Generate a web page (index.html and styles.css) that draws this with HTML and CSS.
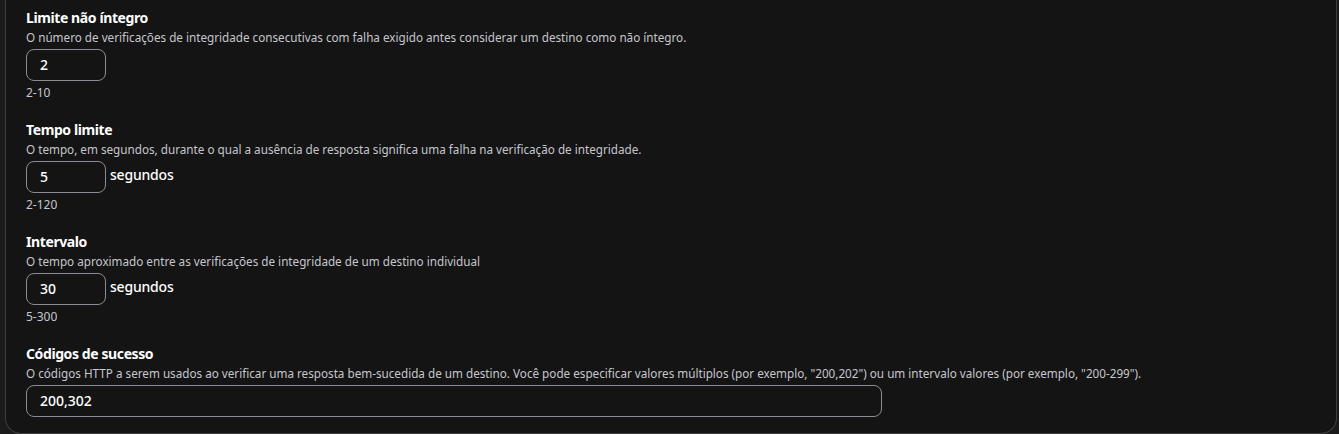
FILE: index.html
```html
<!DOCTYPE html>
<html lang="pt">
<head>
<meta charset="utf-8">
<link rel="stylesheet" href="styles.css">
</head>
<body>
<div class="panel">
  <div class="field">
    <div class="label">Limite não íntegro</div>
    <div class="desc">O número de verificações de integridade consecutivas com falha exigido antes considerar um destino como não íntegro.</div>
    <div class="row"><div class="input small">2</div></div>
    <div class="hint">2-10</div>
  </div>
  <div class="field">
    <div class="label">Tempo limite</div>
    <div class="desc">O tempo, em segundos, durante o qual a ausência de resposta significa uma falha na verificação de integridade.</div>
    <div class="row"><div class="input small">5</div><span class="unit">segundos</span></div>
    <div class="hint">2-120</div>
  </div>
  <div class="field">
    <div class="label">Intervalo</div>
    <div class="desc">O tempo aproximado entre as verificações de integridade de um destino individual</div>
    <div class="row"><div class="input small">30</div><span class="unit">segundos</span></div>
    <div class="hint">5-300</div>
  </div>
  <div class="field last">
    <div class="label">Códigos de sucesso</div>
    <div class="desc">O códigos HTTP a serem usados ao verificar uma resposta bem-sucedida de um destino. Você pode especificar valores múltiplos (por exemplo, "200,202") ou um intervalo valores (por exemplo, "200-299").</div>
    <div class="row"><div class="input wide">200,302</div></div>
  </div>
</div>
</body>
</html>
```

FILE: styles.css
```css
html, body {
  margin: 0;
  padding: 0;
  background: #1b1b1b;
  font-family: "Noto Sans", "Open Sans", sans-serif;
  color: #e9ebed;
}
.panel {
  margin: 0 2px 0 5px;
  background: #141414;
  border: 1px solid #3f3f3f;
  border-top: none;
  border-radius: 0 0 16px 16px;
  padding: 9px 20px 16px 20px;
  height: 408px;
}
.field {
  margin-bottom: 20px;
}
.field.last {
  margin-bottom: 0;
}
.label {
  font-size: 14px;
  line-height: 18px;
  font-weight: 700;
  letter-spacing: -0.4px;
  color: #ffffff;
}
.desc {
  font-size: 11.7px;
  line-height: 16px;
  color: #c6c6cd;
  margin-top: 2px;
}
.row {
  display: flex;
  align-items: flex-start;
  gap: 4px;
  margin-top: 4px;
}
.input {
  box-sizing: border-box;
  height: 32px;
  border: 1px solid #8c8c94;
  border-radius: 8px;
  background: #141414;
  padding: 0 13px;
  font-size: 14px;
  line-height: 30px;
  font-weight: 500;
  color: #ffffff;
}
.input.small { width: 80px; }
.input.wide { width: 856px; }
.unit {
  font-size: 14px;
  line-height: 28px;
  font-weight: 500;
  letter-spacing: -0.2px;
  color: #ffffff;
}
.hint {
  font-size: 12px;
  line-height: 16px;
  color: #c6c6cd;
  margin-top: 4px;
}
```
